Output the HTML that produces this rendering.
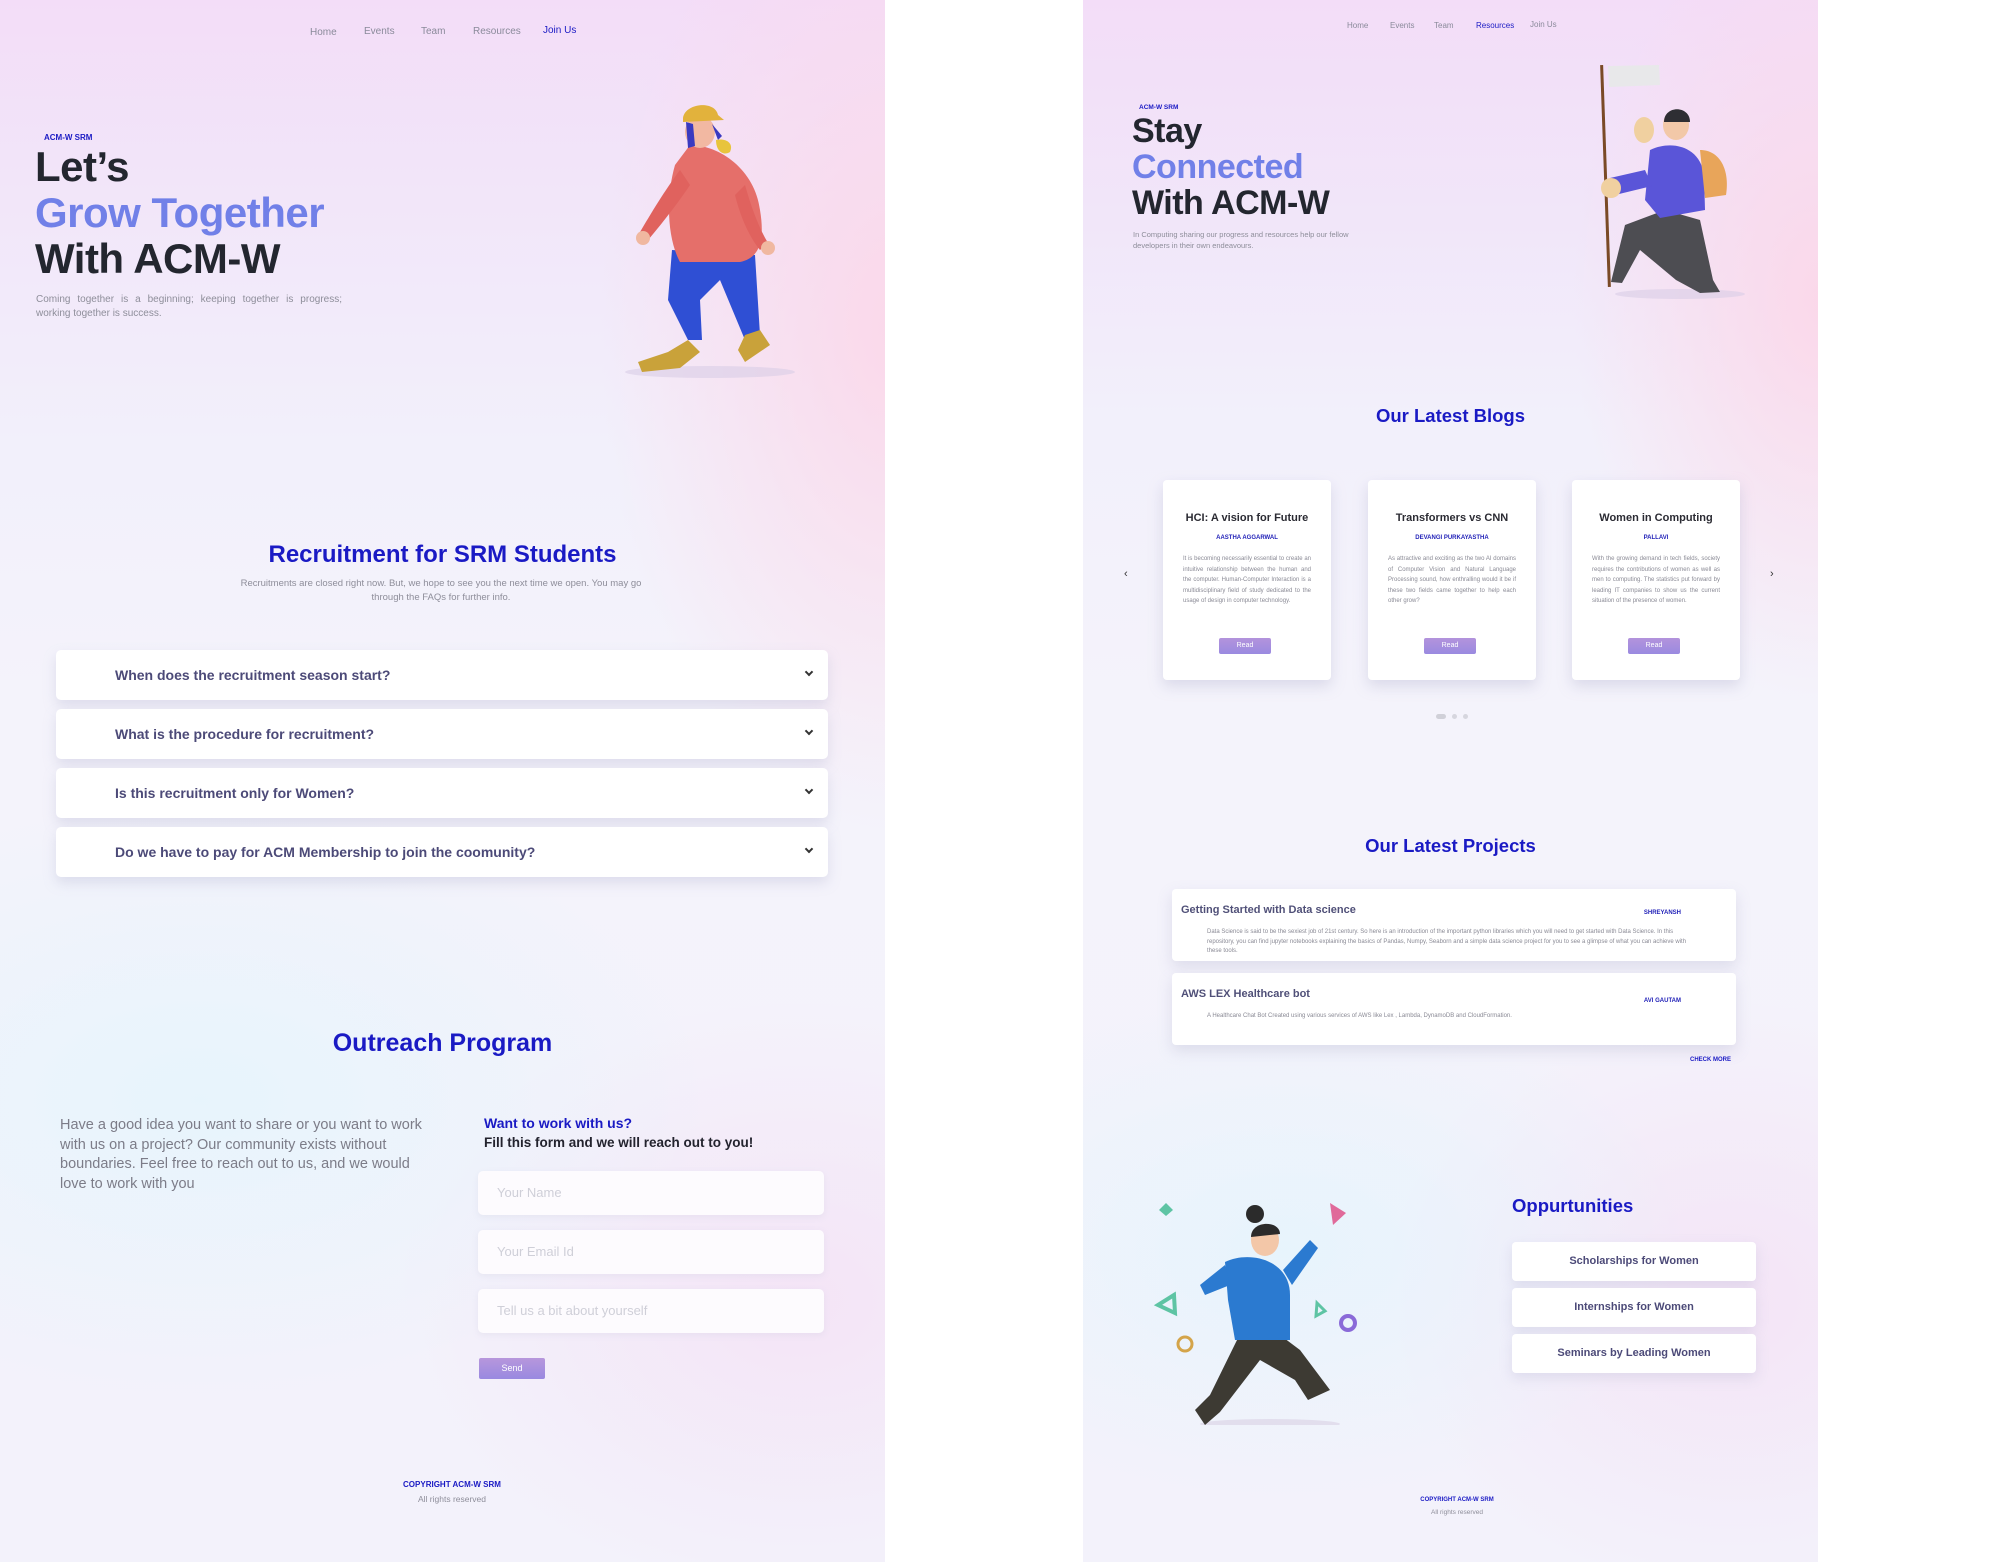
<!DOCTYPE html>
<html><head><meta charset="utf-8">
<style>
*{margin:0;padding:0;box-sizing:border-box}
body{width:1997px;height:1562px;position:relative;background:#fff;font-family:"Liberation Sans",sans-serif;overflow:hidden}
.a{position:absolute;white-space:nowrap}
.panel{position:absolute;top:0;height:1562px;overflow:hidden}
#L{left:0;width:885px;background:
radial-gradient(ellipse 300px 500px at 900px 330px,rgba(252,214,232,.9),rgba(252,214,232,0)),
radial-gradient(ellipse 500px 300px at 200px 1100px,rgba(228,244,252,.8),rgba(228,244,252,0)),
radial-gradient(ellipse 400px 300px at 800px 1300px,rgba(244,222,244,.7),rgba(244,222,244,0)),
linear-gradient(180deg,#f3ddf8 0px,#f2e6f9 200px,#f2f0fb 450px,#f4f3fb 700px,#f3f2fb 1562px)}
#R{left:1083px;width:735px;background:
radial-gradient(ellipse 250px 400px at 740px 300px,rgba(252,214,232,.9),rgba(252,214,232,0)),
radial-gradient(ellipse 400px 250px at 200px 1250px,rgba(228,244,252,.8),rgba(228,244,252,0)),
radial-gradient(ellipse 350px 300px at 650px 1300px,rgba(244,222,244,.7),rgba(244,222,244,0)),
linear-gradient(180deg,#f3ddf8 0px,#f1e6f9 220px,#f2f0fb 420px,#f4f3fb 700px,#f3f2fb 1562px)}
.nav{font-size:10px;color:#8a8a9a}
.blue{color:#1a1ac4}
.hero{font-weight:bold;color:#23262f;letter-spacing:-.5px}
.faq{position:absolute;left:56px;width:772px;height:50px;background:#fff;border-radius:5px;box-shadow:0 6px 12px rgba(180,180,210,.35)}
.faq span{position:absolute;left:59px;top:17px;font-size:14px;font-weight:bold;color:#4c4a78}
.faq i{position:absolute;right:16px;top:19px;width:6px;height:6px;border-right:2px solid #333;border-bottom:2px solid #333;transform:rotate(45deg)}
.inp{position:absolute;left:478px;width:346px;height:44px;background:#fdfbfe;border-radius:5px;box-shadow:0 2px 6px rgba(200,200,220,.25)}
.inp span{position:absolute;left:19px;top:14px;font-size:13px;color:#cfcfd8}
.card{position:absolute;top:480px;width:168px;height:200px;background:#fff;border-radius:4px;box-shadow:0 6px 14px rgba(170,170,200,.35)}
.card h4{position:absolute;top:32px;width:100%;text-align:center;font-size:11px;color:#2b2b33}
.card .au{position:absolute;top:55px;width:100%;text-align:center;font-size:6px;font-weight:bold;color:#2222b8}
.card p{position:absolute;top:74px;left:20px;width:128px;font-size:6px;line-height:10.5px;color:#8a8a95;text-align:justify}
.card .rd{position:absolute;top:158px;left:56px;width:52px;height:16px;border-radius:2px;background:linear-gradient(180deg,#b393dc,#9a8ae0);color:#fff;font-size:7px;text-align:center;line-height:16px}
.proj{position:absolute;left:1172px;width:564px;background:#fff;border-radius:4px;box-shadow:0 6px 14px rgba(170,170,200,.3)}
.proj h4{position:absolute;left:9px;top:15px;font-size:11px;color:#505078}
.proj .au{position:absolute;right:55px;top:21px;font-size:6px;font-weight:bold;color:#2222b8}
.proj p{position:absolute;left:35px;top:39px;width:480px;font-size:6px;line-height:9.5px;color:#8a8a95}
.opp{position:absolute;left:1512px;width:244px;height:39px;background:#fff;border-radius:4px;box-shadow:0 5px 12px rgba(180,180,210,.3);text-align:center;line-height:39px;font-size:11px;font-weight:bold;color:#4c4a78}
</style></head><body>

<div class="panel" id="L"></div>
<div class="panel" id="R"></div>

<div class="a nav" style="left:310px;top:27px">Home</div>
<div class="a nav" style="left:364px;top:26px">Events</div>
<div class="a nav" style="left:421px;top:26px">Team</div>
<div class="a nav" style="left:473px;top:26px">Resources</div>
<div class="a nav blue" style="left:543px;top:25px">Join Us</div>

<div class="a blue" style="left:44px;top:133px;font-size:8px;font-weight:bold">ACM-W SRM</div>
<div class="a hero" style="left:35px;top:144px;font-size:42px;line-height:46px">Let’s</div>
<div class="a hero" style="left:35px;top:190px;font-size:42px;line-height:46px;color:#7180e8">Grow Together</div>
<div class="a hero" style="left:35px;top:236px;font-size:42px;line-height:46px">With ACM-W</div>
<div class="a" style="left:36px;top:293px;font-size:10px;line-height:14px;color:#8e8e9a;white-space:normal;width:306px;text-align:justify">Coming together is a beginning; keeping together is progress; working together is success.</div>

<svg class="a" style="left:0;top:0" width="885" height="400" viewBox="0 0 885 400">
<ellipse cx="710" cy="372" rx="85" ry="6" fill="#d8cde6" opacity=".6"/>
<path d="M672 250 L668 300 L688 340 L702 340 L700 300 L720 280 L745 340 L760 335 L755 255 Z" fill="#2f4fd4"/>
<path d="M688 340 L668 352 L638 362 L642 372 L680 368 L700 352 Z" fill="#c9a23a"/>
<path d="M745 335 L760 330 L770 345 L745 362 L738 350 Z" fill="#c9a23a"/>
<path d="M690 145 C720 145 755 170 760 210 C765 240 760 258 740 262 L680 262 C668 240 665 200 675 165 Z" fill="#e56f6a"/>
<path d="M680 170 C665 190 650 215 640 232 L648 240 C665 220 680 200 690 185 Z" fill="#e0625e"/>
<path d="M745 185 C752 210 760 230 768 243 L760 250 C748 235 740 215 735 195 Z" fill="#e0625e"/>
<circle cx="643" cy="238" r="7" fill="#f0b8a0"/><circle cx="768" cy="248" r="7" fill="#f0b8a0"/>
<ellipse cx="700" cy="132" rx="15" ry="16" fill="#f2b8a2"/>
<path d="M686 122 L688 148 L695 146 L693 124 Z M712 124 L718 140 L722 136 Z" fill="#3a3ac0"/>
<path d="M683 118 C685 103 715 100 718 115 L724 120 L683 122 Z" fill="#e2b23c"/>
<path d="M716 140 C726 138 734 143 730 152 C724 156 716 152 716 140Z" fill="#e8c43c"/>
</svg>

<div class="a blue" style="left:0;width:885px;text-align:center;top:541px;font-size:24px;font-weight:bold">Recruitment for SRM Students</div>
<div class="a" style="left:240px;width:402px;text-align:center;top:577px;font-size:9.5px;line-height:14px;color:#8e8e9a;white-space:normal">Recruitments are closed right now. But, we hope to see you the next time we open. You may go through the FAQs for further info.</div>

<div class="faq" style="top:650px"><span>When does the recruitment season start?</span><i></i></div>
<div class="faq" style="top:709px"><span>What is the procedure for recruitment?</span><i></i></div>
<div class="faq" style="top:768px"><span>Is this recruitment only for Women?</span><i></i></div>
<div class="faq" style="top:827px"><span>Do we have to pay for ACM Membership to join the coomunity?</span><i></i></div>

<div class="a blue" style="left:0;width:885px;text-align:center;top:1029px;font-size:25px;font-weight:bold">Outreach Program</div>
<div class="a" style="left:60px;top:1116px;width:380px;white-space:normal;font-size:14.5px;line-height:19.5px;color:#7c7c88">Have a good idea you want to share or you want to work with us on a project? Our community exists without boundaries. Feel free to reach out to us, and we would love to work with you</div>
<div class="a blue" style="left:484px;top:1115px;font-size:14px;font-weight:bold">Want to work with us?</div>
<div class="a" style="left:484px;top:1135px;font-size:13.5px;font-weight:bold;color:#23232e">Fill this form and we will reach out to you!</div>
<div class="inp" style="top:1171px"><span>Your Name</span></div>
<div class="inp" style="top:1230px"><span>Your Email Id</span></div>
<div class="inp" style="top:1289px"><span>Tell us a bit about yourself</span></div>
<div class="a" style="left:479px;top:1358px;width:66px;height:21px;border-radius:2px;background:linear-gradient(180deg,#b797dc,#9989e0);color:#fff;font-size:9px;text-align:center;line-height:21px">Send</div>

<div class="a blue" style="left:0;width:904px;text-align:center;top:1480px;font-size:8px;font-weight:bold">COPYRIGHT ACM-W SRM</div>
<div class="a" style="left:0;width:904px;text-align:center;top:1494px;font-size:8.5px;color:#8e8e9a">All rights reserved</div>

<div class="a nav" style="left:1347px;top:21px;font-size:8px">Home</div>
<div class="a nav" style="left:1390px;top:21px;font-size:8px">Events</div>
<div class="a nav" style="left:1434px;top:21px;font-size:8px">Team</div>
<div class="a nav blue" style="left:1476px;top:21px;font-size:8px">Resources</div>
<div class="a nav" style="left:1530px;top:20px;font-size:8px">Join Us</div>

<div class="a blue" style="left:1139px;top:104px;font-size:6.5px;font-weight:bold">ACM-W SRM</div>
<div class="a hero" style="left:1132px;top:113px;font-size:34px;line-height:36px">Stay</div>
<div class="a hero" style="left:1132px;top:149px;font-size:34px;line-height:36px;color:#7180e8">Connected</div>
<div class="a hero" style="left:1132px;top:185px;font-size:34px;line-height:36px">With ACM-W</div>
<div class="a" style="left:1133px;top:229px;width:250px;white-space:normal;font-size:7.5px;line-height:11px;color:#8e8e9a">In Computing sharing our progress and resources help our fellow developers in their own endeavours.</div>

<svg class="a" style="left:1560px;top:55px" width="200" height="250" viewBox="1560 55 200 250">
<ellipse cx="1680" cy="294" rx="65" ry="5" fill="#d8cde6" opacity=".6"/>
<rect x="1604" y="65" width="3" height="222" fill="#7a4a26" transform="rotate(-2 1605 176)"/>
<path d="M1608 66 L1659 65 L1660 85 L1609 87 Z" fill="#e8e8ea"/>
<path d="M1676 280 L1640 250 L1622 283 L1611 282 L1625 225 L1665 210 L1700 220 L1713 280 L1720 292 L1700 293 Z" fill="#4d4d52"/>
<path d="M1650 150 C1670 140 1700 145 1704 175 L1705 210 L1660 218 L1645 200 Z" fill="#5a55d8"/>
<path d="M1610 178 L1645 170 L1652 186 L1615 195 Z" fill="#5a55d8"/>
<path d="M1700 150 C1720 150 1730 170 1726 195 L1705 198 Z" fill="#e8a55a"/>
<ellipse cx="1676" cy="125" rx="13" ry="15" fill="#f2c8a8"/>
<path d="M1664 122 C1664 105 1690 105 1690 122 Z" fill="#2e2e33"/>
<ellipse cx="1644" cy="130" rx="10" ry="13" fill="#f0d0a0"/>
<ellipse cx="1611" cy="188" rx="10" ry="10" fill="#f0d0a0"/>
</svg>

<div class="a blue" style="left:1083px;width:735px;text-align:center;top:405px;font-size:18.5px;font-weight:bold">Our Latest Blogs</div>
<div class="a" style="left:1124px;top:568px;font-size:11px;color:#333">‹</div>
<div class="a" style="left:1770px;top:568px;font-size:11px;color:#333">›</div>
<div class="card" style="left:1163px"><h4>HCI: A vision for Future</h4><div class="au">AASTHA AGGARWAL</div><p>It is becoming necessarily essential to create an intuitive relationship between the human and the computer. Human-Computer Interaction is a multidisciplinary field of study dedicated to the usage of design in computer technology.</p><div class="rd">Read</div></div>
<div class="card" style="left:1368px"><h4>Transformers vs CNN</h4><div class="au">DEVANGI PURKAYASTHA</div><p>As attractive and exciting as the two AI domains of Computer Vision and Natural Language Processing sound, how enthralling would it be if these two fields came together to help each other grow?</p><div class="rd">Read</div></div>
<div class="card" style="left:1572px"><h4>Women in Computing</h4><div class="au">PALLAVI</div><p>With the growing demand in tech fields, society requires the contributions of women as well as men to computing. The statistics put forward by leading IT companies to show us the current situation of the presence of women.</p><div class="rd">Read</div></div>
<div class="a" style="left:1436px;top:714px;width:10px;height:5px;border-radius:3px;background:#d0d0d8"></div>
<div class="a" style="left:1452px;top:714px;width:5px;height:5px;border-radius:3px;background:#d6d6de"></div>
<div class="a" style="left:1463px;top:714px;width:5px;height:5px;border-radius:3px;background:#d6d6de"></div>

<div class="a blue" style="left:1083px;width:735px;text-align:center;top:835px;font-size:18.5px;font-weight:bold">Our Latest Projects</div>
<div class="proj" style="top:889px;height:72px"><h4>Getting Started with Data science</h4><div class="au">SHREYANSH</div><p>Data Science is said to be the sexiest job of 21st century. So here is an introduction of the important python libraries which you will need to get started with Data Science. In this repository, you can find jupyter notebooks explaining the basics of Pandas, Numpy, Seaborn and a simple data science project for you to see a glimpse of what you can achieve with these tools.</p></div>
<div class="proj" style="top:973px;height:72px"><h4>AWS LEX Healthcare bot</h4><div class="au" style="top:25px">AVI GAUTAM</div><p>A Healthcare Chat Bot Created using various services of AWS like Lex , Lambda, DynamoDB and CloudFormation.</p></div>
<div class="a blue" style="left:1690px;top:1057px;font-size:6px;font-weight:bold">CHECK MORE</div>

<svg class="a" style="left:1150px;top:1185px" width="220" height="240" viewBox="1150 1185 220 240">
<ellipse cx="1270" cy="1424" rx="70" ry="5" fill="#d8d0e4" opacity=".6"/>
<path d="M1166 1203 L1173 1210 L1166 1216 L1159 1210Z" fill="#5ec4a4"/>
<path d="M1330 1203 L1346 1213 L1333 1225 Z" fill="#e06a9a"/>
<path d="M1174 1295 L1158 1305 L1175 1313 Z" fill="none" stroke="#5ec4a4" stroke-width="4"/>
<path d="M1317 1303 L1325 1311 L1316 1316 Z" fill="none" stroke="#5ec4a4" stroke-width="3"/>
<circle cx="1348" cy="1323" r="7" fill="none" stroke="#8a6ad8" stroke-width="4"/>
<circle cx="1185" cy="1344" r="7" fill="none" stroke="#d4a44a" stroke-width="3"/>
<path d="M1238 1338 L1210 1395 L1195 1410 L1205 1425 L1220 1412 L1260 1360 L1295 1380 L1308 1400 L1330 1390 L1300 1350 L1280 1335 Z" fill="#3d3a33"/>
<path d="M1225 1262 C1250 1250 1290 1260 1290 1295 L1290 1340 L1235 1340 L1228 1300 Z" fill="#2b7ad0"/>
<path d="M1225 1265 L1200 1285 L1205 1295 L1230 1285 Z" fill="#2b7ad0"/>
<path d="M1283 1270 L1310 1240 L1318 1248 L1292 1285 Z" fill="#2b7ad0"/>
<ellipse cx="1265" cy="1240" rx="14" ry="16" fill="#f3c7a8"/>
<path d="M1251 1237 C1251 1220 1280 1220 1280 1234 Z" fill="#2b2b2b"/>
<circle cx="1255" cy="1214" r="9" fill="#2b2b2b"/>
</svg>

<div class="a blue" style="left:1512px;top:1195px;font-size:18.5px;font-weight:bold">Oppurtunities</div>
<div class="opp" style="top:1242px">Scholarships for Women</div>
<div class="opp" style="top:1288px">Internships for Women</div>
<div class="opp" style="top:1334px">Seminars by Leading Women</div>

<div class="a blue" style="left:1400px;width:114px;text-align:center;top:1497px;font-size:6px;font-weight:bold">COPYRIGHT ACM-W SRM</div>
<div class="a" style="left:1400px;width:114px;text-align:center;top:1509px;font-size:6.5px;color:#8e8e9a">All rights reserved</div>

</body></html>
